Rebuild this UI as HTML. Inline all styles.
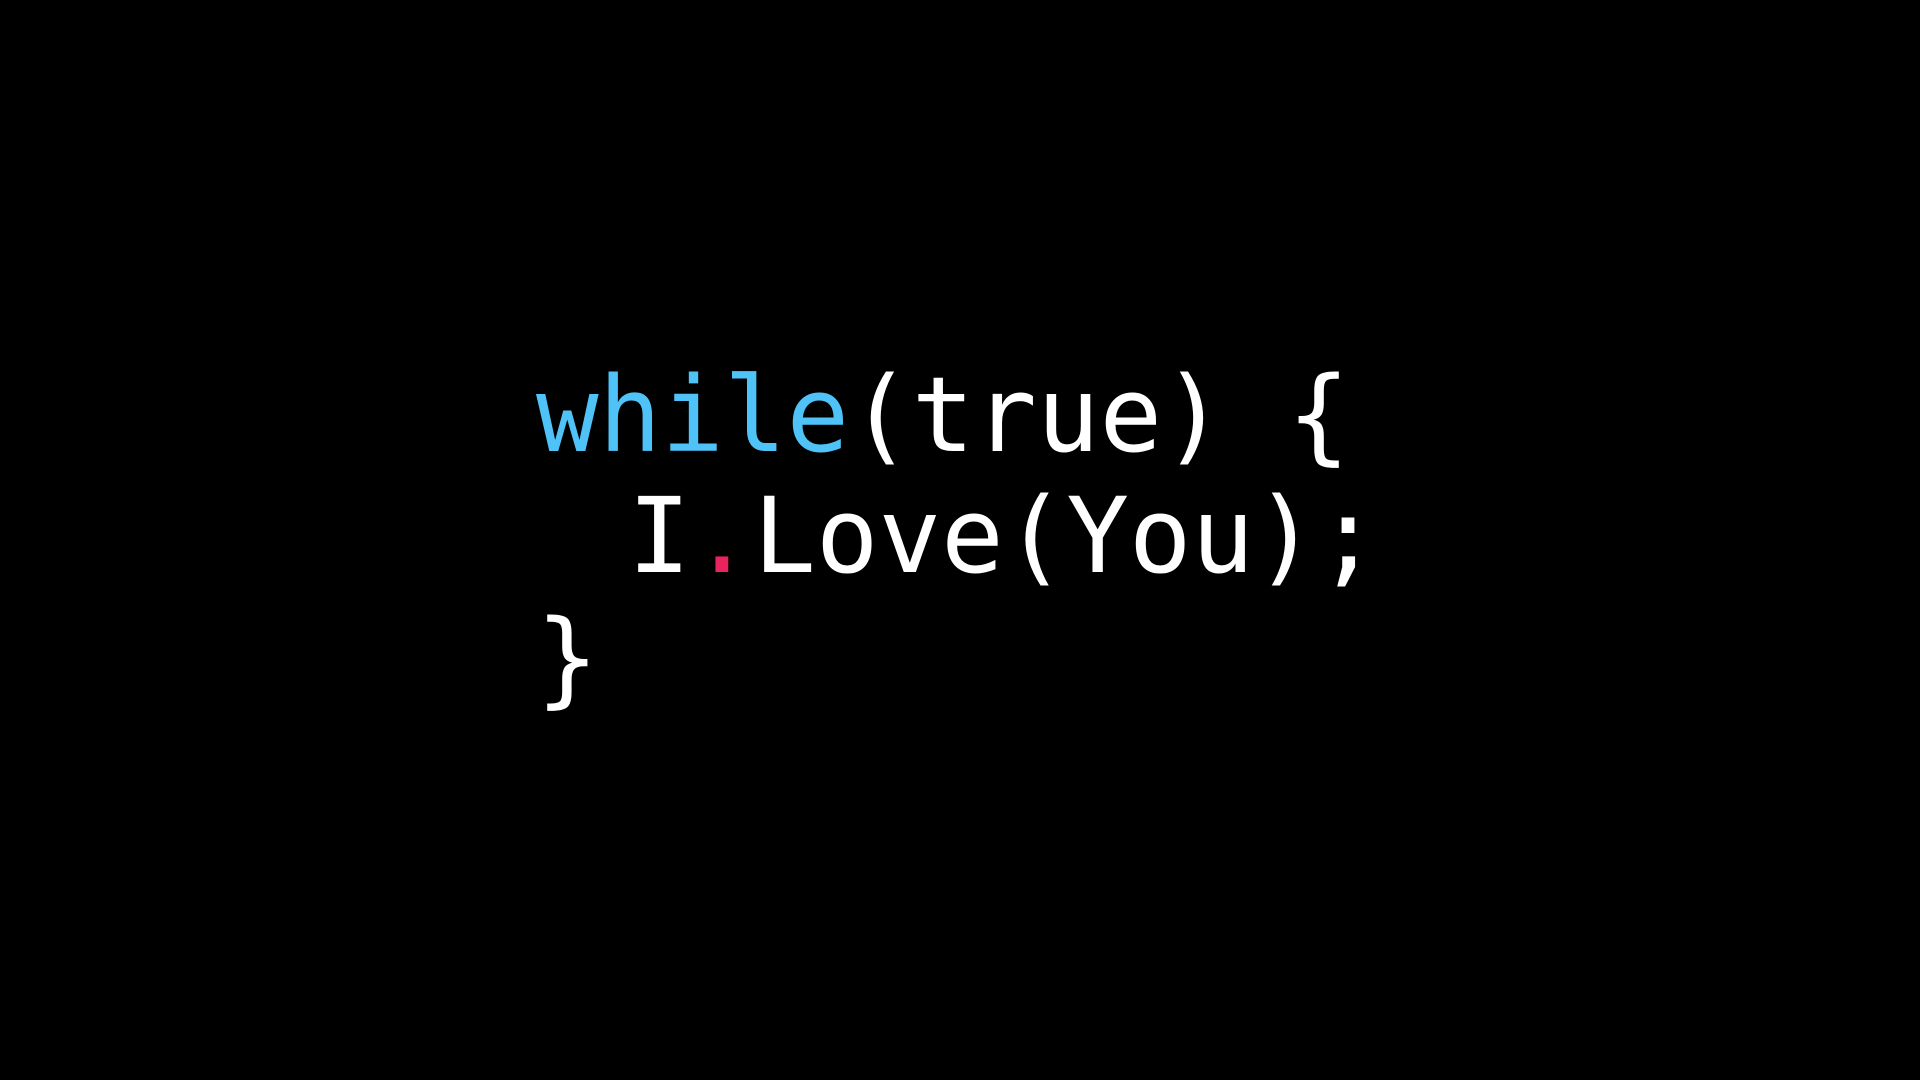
<!DOCTYPE html>
<html>
<head>
<meta charset="utf-8">
<style>
  html,body{margin:0;padding:0;background:#000;width:1920px;height:1080px;overflow:hidden;}
  .l{position:absolute;font-family:"DejaVu Sans Mono","Liberation Mono",monospace;font-size:104px;line-height:104px;color:#fff;white-space:pre;}
  .b{color:#4fc3f7;}
  .r{color:#e8245f;}
</style>
</head>
<body>
<div class="l" style="left:536px;top:363px;"><span class="b">while</span>(true) {</div>
<div class="l" style="left:628px;top:484px;">I<span class="r">.</span>Love(You);</div>
<div class="l" style="left:536px;top:606px;">}</div>
</body>
</html>
